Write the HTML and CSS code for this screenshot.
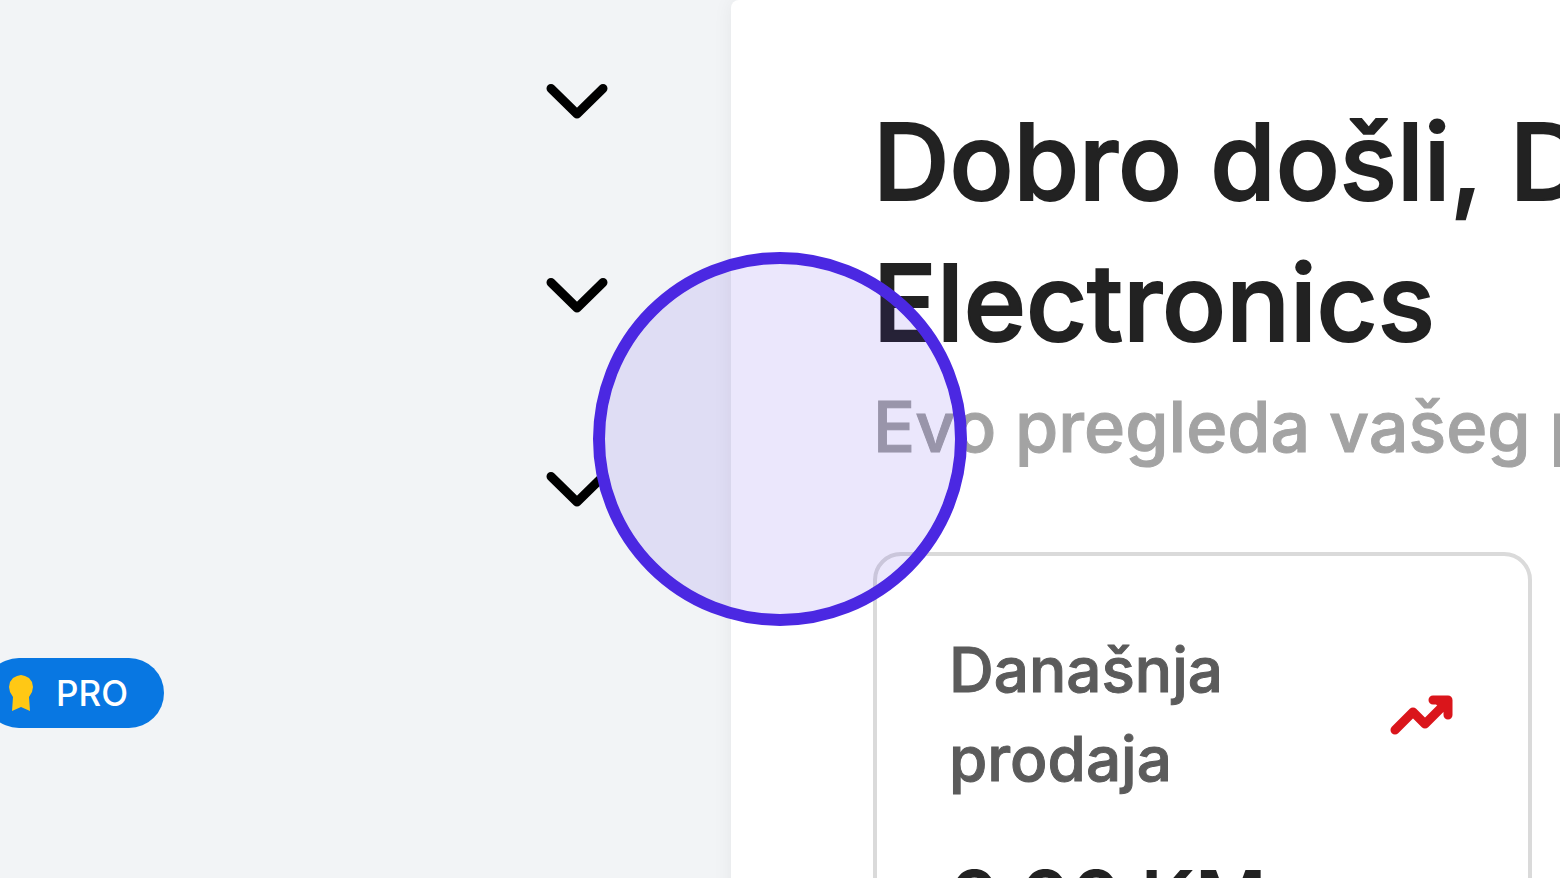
FILE: index.html
```html
<!DOCTYPE html>
<html lang="bs">
<head>
<meta charset="utf-8">
<title>Dobro došli</title>
<link rel="stylesheet" href="styles.css">
</head>
<body>
<div class="app">
  <nav class="sidebar">
    <button class="nav-row" type="button" aria-label="Proširi" aria-expanded="false">
      <svg class="chevron" viewBox="0 0 62 36" aria-hidden="true"><path d="M5 5.500 31 31 57 5.500"/></svg>
    </button>
    <button class="nav-row" type="button" aria-label="Proširi" aria-expanded="false">
      <svg class="chevron" viewBox="0 0 62 36" aria-hidden="true"><path d="M5 5.500 31 31 57 5.500"/></svg>
    </button>
    <button class="nav-row" type="button" aria-label="Proširi" aria-expanded="false">
      <svg class="chevron" viewBox="0 0 62 36" aria-hidden="true"><path d="M5 5.500 31 31 57 5.500"/></svg>
    </button>
    <a class="nav-row nav-row-pro" href="#pro">
      <span class="badge">
        <svg class="medal" viewBox="0 0 26 38" aria-hidden="true"><path d="M13 1 17 2 21 4 24 8 25 13 24 18 21 23 22 37 13 33 4 37 5 23 2 18 1 13 2 8 5 4 9 2Z"/></svg>
        PRO
      </span>
    </a>
    <button class="nav-row" type="button" aria-label="Proširi" aria-expanded="false">
      <svg class="chevron" viewBox="0 0 62 36" aria-hidden="true"><path d="M5 5.500 31 31 57 5.500"/></svg>
    </button>
  </nav>
  <main class="content">
    <h1 class="title">Dobro došli, D<br>Electronics</h1>
    <p class="subtitle">Evo pregleda vašeg p</p>
    <section class="card">
      <div class="card-head">
        <h2 class="card-label">Današnja prodaja</h2>
        <svg class="trend" viewBox="0 0 64 42" aria-hidden="true"><path d="M3 37 21 19 33 31 54 10M41 7H56V22M47 8 55 16"/></svg>
      </div>
      <p class="card-value">0.00 KM</p>
    </section>
  </main>
</div>
<div class="pointer"></div>
</body>
</html>
```
FILE: styles.css
```css
* {
  box-sizing: border-box;
}

body {
  margin: 0;
  overflow: hidden;
  background: #f2f4f6;
  font-family: Inter, "Liberation Sans", sans-serif;
  font-optical-sizing: none;
  font-weight: 500;
}

.app {
  display: grid;
  grid-template-columns: 731px minmax(0, 1fr);
  height: 100vh;
  overflow: hidden;
}

.sidebar {
  display: flex;
  flex-direction: column;
  padding-top: 4px;
}

.nav-row {
  display: flex;
  flex: none;
  align-items: center;
  justify-content: flex-end;
  height: 194px;
  padding: 0 123px 0 0;
  border: 0;
  background: none;
}

.nav-row-pro {
  justify-content: flex-start;
  height: 213px;
  padding: 0;
  text-decoration: none;
}

.chevron {
  width: 62px;
  height: 36px;
  fill: none;
  stroke: #000;
  stroke-width: 9;
  stroke-linecap: round;
  stroke-linejoin: round;
}

.badge {
  display: flex;
  align-items: center;
  gap: 22px;
  height: 70px;
  margin-left: -16px;
  padding: 0 36px 0 24px;
  border-radius: 35px;
  background: #0877e2;
  color: #fff;
  font-size: 35px;
}

.medal {
  width: 26px;
  height: 38px;
  fill: #ffc815;
}

.content {
  padding: 91px 28px 0 142px;
  border-top-left-radius: 8px;
  background: #fff;
  box-shadow: 0 0 20px rgba(0, 0, 0, 0.06);
  white-space: nowrap;
}

.title {
  margin: 0;
  color: #222;
  font-size: 106px;
  font-weight: 500;
  line-height: 141px;
  -webkit-text-stroke: 2px #222;
}

.subtitle {
  margin: 0;
  color: #a3a3a3;
  font-size: 70px;
  line-height: 108px;
  -webkit-text-stroke: 1px #a3a3a3;
}

.card {
  margin-top: 71px;
  padding: 69px 72px;
  border: 4px solid #dadada;
  border-radius: 28px;
}

.card-head {
  display: flex;
  align-items: center;
  justify-content: space-between;
}

.card-label {
  width: min-content;
  margin: 0;
  color: #5b5b5b;
  font-size: 62px;
  font-weight: 500;
  line-height: 89px;
  white-space: normal;
  -webkit-text-stroke: 1px #5b5b5b;
}

.trend {
  width: 64px;
  height: 42px;
  fill: none;
  stroke: #da151b;
  stroke-width: 9;
  stroke-linecap: round;
  stroke-linejoin: round;
  overflow: visible;
}

.card-value {
  margin: 45px 0 0;
  color: #222;
  font-size: 77px;
  font-weight: 600;
  line-height: 100px;
}

.pointer {
  position: fixed;
  top: 50%;
  left: 50%;
  width: 374px;
  height: 374px;
  border: 12px solid #4b28e2;
  border-radius: 50%;
  background: rgba(75, 40, 226, 0.11);
  background-clip: padding-box;
  transform: translate(-50%, -50%);
  pointer-events: none;
}
```
